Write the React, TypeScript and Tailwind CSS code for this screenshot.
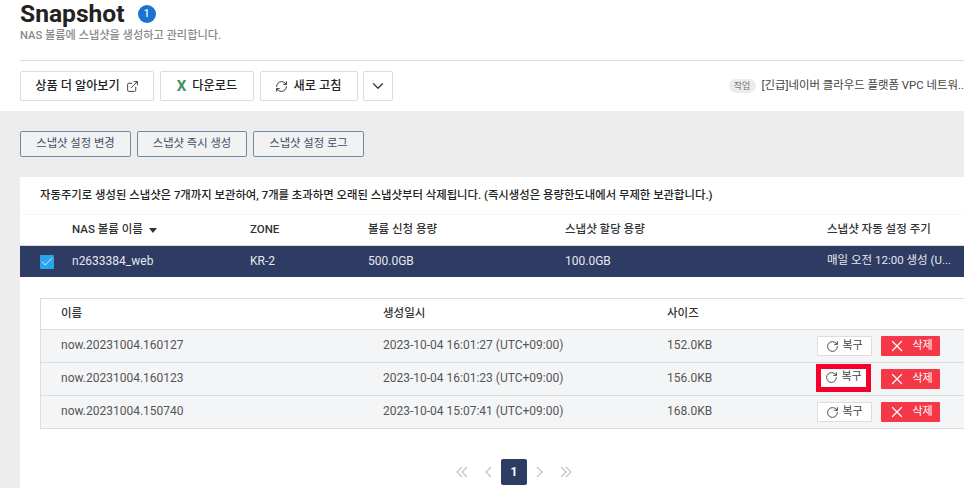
import { ExternalLink, RefreshCw, ChevronDown, RotateCw, X, Check } from "lucide-react";

const font = { fontFamily: '"Roboto", "Noto Sans CJK KR", sans-serif' };

const rows = [
  ["now.20231004.160127", "2023-10-04 16:01:27 (UTC+09:00)", "152.0KB"],
  ["now.20231004.160123", "2023-10-04 16:01:23 (UTC+09:00)", "156.0KB"],
  ["now.20231004.150740", "2023-10-04 15:07:41 (UTC+09:00)", "168.0KB"],
];

function TopButton({ className, children }: { className: string; children: React.ReactNode }) {
  return (
    <button className={`h-[30px] shrink-0 flex items-center justify-center gap-[6px] bg-white border border-[#dcdcdc] rounded-[2px] text-[12.2px] font-medium text-[#222] ${className}`}>
      {children}
    </button>
  );
}

function GrayButton({ className, children }: { className: string; children: React.ReactNode }) {
  return (
    <button className={`h-[26px] shrink-0 flex items-center justify-center bg-[#f2f2f3] border border-[#6f8aa5] rounded-[2px] text-[11.3px] text-[#3c4f69] ${className}`}>
      {children}
    </button>
  );
}

function Pager({ d, w }: { d: string; w: number }) {
  return (
    <svg width={w} height="12" viewBox={`0 0 ${w} 12`} fill="none" stroke="#c6c6c6" strokeWidth="1.4" className="shrink-0">
      <path d={d} />
    </svg>
  );
}

export default function App() {
  return (
    <div style={font} className="w-[964px] h-[488px] overflow-hidden bg-white flex flex-col">
      <header className="h-[111px] shrink-0 bg-white px-5 flex flex-col">
        <div className="flex items-center h-[27px] gap-[13px]">
          <h1 className="text-[24.6px] leading-[27px] font-bold text-[#222] -mt-[1px]">Snapshot</h1>
          <span className="w-[18px] h-[18px] rounded-full bg-[#1a73d0] text-white text-[10px] font-medium flex items-center justify-center">1</span>
        </div>
        <p className="text-[11.2px] leading-[16px] mt-[1px] text-[#8a8a8a] font-medium">NAS 볼륨에 스냅샷을 생성하고 관리합니다.</p>
        <div className="h-px bg-[#dddddd] mt-[16px] mr-[-20px] shrink-0" />
        <div className="flex items-center mt-[10px]">
          <TopButton className="w-[134px]">
            상품 더 알아보기
            <ExternalLink size={13} strokeWidth={1.7} className="text-[#333]" />
          </TopButton>
          <TopButton className="w-[94px] ml-[6px]">
            <span className="text-[#3f8f5f] text-[15px] font-bold leading-none">X</span>
            다운로드
          </TopButton>
          <TopButton className="w-[98px] ml-[6px] gap-[5px] pr-[2px]">
            <RefreshCw size={13} strokeWidth={1.8} className="text-[#333]" />
            새로 고침
          </TopButton>
          <TopButton className="w-[30px] ml-[5px]">
            <ChevronDown size={18} strokeWidth={1.6} className="text-[#333]" />
          </TopButton>
          <div className="ml-auto flex items-center mr-[-20px] min-w-0">
            <span className="h-[14px] w-[27px] rounded-full bg-[#ececec] text-[#777] text-[9px] leading-[14px] text-center mr-[6px] shrink-0">작업</span>
            <span className="text-[11.4px] text-[#444] whitespace-nowrap">[긴급]네이버 클라우드 플랫폼 VPC 네트워..</span>
          </div>
        </div>
      </header>

      <main className="flex-1 min-h-0 bg-[#ededed] pl-5 pt-5 flex flex-col">
        <div className="flex gap-[6px] h-[26px] shrink-0">
          <GrayButton className="w-[111px]">스냅샷 설정 변경</GrayButton>
          <GrayButton className="w-[110px]">스냅샷 즉시 생성</GrayButton>
          <GrayButton className="w-[111px]">스냅샷 설정 로그</GrayButton>
        </div>

        <section className="mt-[20px] flex-1 bg-white flex flex-col min-h-0">
          <p className="h-[38px] shrink-0 pl-5 pt-[9px] text-[11.36px] leading-[18px] font-medium text-[#222] whitespace-nowrap border-b border-[#f6f6f6]">
            자동주기로 생성된 스냅샷은 7개까지 보관하여, 7개를 초과하면 오래된 스냅샷부터 삭제됩니다. (즉시생성은 용량한도내에서 무제한 보관합니다.)
          </p>
          <div className="h-[31px] shrink-0 flex items-center text-[11.5px] font-medium text-[#333] border-b border-[#dddddd]">
            <div className="w-[230px] pl-[52px] flex items-center gap-[6px]">
              NAS 볼륨 이름
              <span className="w-0 h-0 border-x-[4px] border-x-transparent border-t-[5px] border-t-[#333]" />
            </div>
            <div className="w-[118px]">ZONE</div>
            <div className="w-[197px]">볼륨 신청 용량</div>
            <div className="w-[262px]">스냅샷 할당 용량</div>
            <div className="whitespace-nowrap">스냅샷 자동 설정 주기</div>
          </div>
          <div className="h-[31px] shrink-0 flex items-center bg-[#2e3b63] text-[12px] text-[#e6e8ee]">
            <div className="w-[230px] pl-5 flex items-center gap-[18px]">
              <span className="w-[14px] h-[14px] rounded-[1px] bg-[#2ba4ee] flex items-center justify-center">
                <Check size={14} strokeWidth={1.4} className="text-white" />
              </span>
              <span className="pb-[2px]">n2633384_web</span>
            </div>
            <div className="w-[118px] pb-[2px]">KR-2</div>
            <div className="w-[197px] pb-[2px]">500.0GB</div>
            <div className="w-[262px] pb-[2px]">100.0GB</div>
            <div className="whitespace-nowrap text-[11.5px] pb-[2px]">매일 오전 12:00 생성 (U...</div>
          </div>

          <div className="ml-5 mt-[21px] shrink-0 border border-[#dddddd] border-r-0">
            <div className="h-[31px] flex items-center text-[11.5px] font-medium text-[#333] border-b border-[#dddddd] bg-white">
              <div className="w-[342px] pl-[20px]">이름</div>
              <div className="w-[284px]">생성일시</div>
              <div>사이즈</div>
            </div>
            {rows.map((r, i) => (
              <div key={r[0]} className="h-[33px] flex items-center text-[12px] text-[#555] bg-[#f4f5f7] border-b border-[#dddddd] last:border-b-0 last:h-[32px]">
                <div className="w-[342px] pl-[20px] pb-[2px]">{r[0]}</div>
                <div className="w-[284px] pb-[2px]">{r[1]}</div>
                <div className="w-[149px] pb-[2px]">{r[2]}</div>
                {i === 1 ? (
                  <button className="w-[55px] h-[28px] -mt-[3px] border-[5px] border-[#f5002d] bg-white flex items-center justify-center gap-[3px] text-[11px] text-[#444]">
                    <RotateCw size={13} strokeWidth={1.6} className="text-[#333]" />
                    복구
                  </button>
                ) : (
                  <button className="ml-px w-[55px] h-[20px] border border-[#dddddd] bg-white rounded-[1px] flex items-center justify-center gap-[3px] text-[11px] text-[#444]">
                    <RotateCw size={13} strokeWidth={1.6} className="text-[#333]" />
                    복구
                  </button>
                )}
                <button className={`w-[59px] h-[20px] bg-[#f53848] rounded-[1px] flex items-center justify-center gap-[6px] text-[11px] text-white ${i === 1 ? "ml-[10px]" : "ml-[9px]"}`}>
                  <X size={18} strokeWidth={1.6} />
                  삭제
                </button>
              </div>
            ))}
          </div>

          <div className="mt-[30px] h-[26px] shrink-0 flex items-center justify-center pl-[44px]">
            <Pager w={12} d="M6 1 1 6l5 5M11 1 6 6l5 5" />
            <span className="w-[16px]" />
            <Pager w={8} d="M7 1 2 6l5 5" />
            <span className="w-[9px]" />
            <span className="w-[26px] h-[26px] rounded-[2px] bg-[#2e3b63] text-white text-[12px] font-bold flex items-center justify-center">1</span>
            <span className="w-[9px]" />
            <Pager w={8} d="M1 1l5 5-5 5" />
            <span className="w-[16px]" />
            <Pager w={12} d="M1 1l5 5-5 5M6 1l5 5-5 5" />
          </div>
        </section>
      </main>
    </div>
  );
}
